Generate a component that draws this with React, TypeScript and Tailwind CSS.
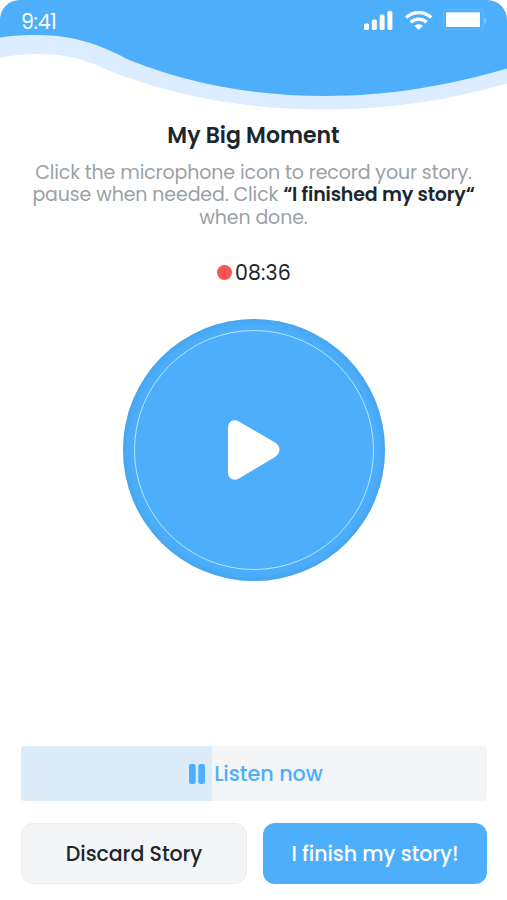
import { useState } from 'react'

const PROGRESS = 41

function StatusIcons() {
  return (
    <svg width="124" height="24" viewBox="363 8 124 24" fill="none">
      <g fill="#fff">
        <rect x="364" y="23.5" width="5" height="6.5" rx="1.6" />
        <rect x="371.8" y="19.5" width="5" height="10.5" rx="1.6" />
        <rect x="379.6" y="14.5" width="5" height="15.5" rx="1.6" />
        <rect x="387.4" y="11" width="5" height="19" rx="1.6" />
      </g>
      <g stroke="#fff" strokeWidth="3.3">
        <path d="M406.2 17.5C413.2 10.9 424.2 10.9 431.2 17.5" />
        <path d="M410.7 22.3C415.2 18.1 422.2 18.1 426.7 22.3" />
      </g>
      <path d="M414.4 25.8C416.9 23.7 420.5 23.7 423 25.8L418.7 30Z" fill="#fff" />
      <rect x="443.5" y="9.5" width="40" height="20" rx="2.5" stroke="#fff" strokeOpacity=".13" />
      <rect x="446" y="12.3" width="34" height="14.7" rx=".8" fill="#fff" />
      <path d="M484.5 17.5C486.8 18.5 486.8 22.5 484.5 23.5Z" fill="#fff" fillOpacity=".4" />
    </svg>
  )
}

function Header() {
  return (
    <header className="relative h-[112px] overflow-hidden rounded-t-[20px]">
      <svg className="absolute inset-0" width="507" height="112" viewBox="0 0 507 112">
        <path d="M0 0H507V83.5C450 100 390 109.5 325 109.5C250 109.5 184 98 117 74C99 67 80 54 39 54C25 54 12 55 0 58Z" fill="#dbedfe" />
        <path d="M0 0H507V68.5C450 85 390 96 325 96C255 96 190 84 133 61.5C112 52 85 35 38 35C25 35 12 35.5 0 37.5Z" fill="#4daefb" />
      </svg>
      <div className="relative flex items-start justify-between pt-2 pr-5 pl-[21px] text-white">
        <span className="mt-[2px] text-[20.5px] leading-[24px] tracking-[-0.3px]">9:41</span>
        <StatusIcons />
      </div>
    </header>
  )
}

export default function App() {
  const [playing, setPlaying] = useState(true)

  return (
    <div className="flex h-[900px] w-[507px] flex-col bg-white font-['Poppins','Inter',sans-serif] text-[#1b262d]">
      <Header />

      <main className="flex flex-1 flex-col items-center">
        <h1 className="mt-[10px] text-[22px] leading-[28px] font-semibold whitespace-nowrap">My Big Moment</h1>
        <div className="mt-[12px] flex flex-col items-center text-[19px] leading-[22.3px] tracking-[-0.13px] whitespace-nowrap text-[#9aa1a6]">
          <span>Click the microphone icon to record your story.</span>
          <span>
            pause when needed. Click{' '}
            <strong className="font-semibold tracking-[-0.15px] text-[#1b262d]">“I finished my story“</strong>
          </span>
          <span>when done.</span>
        </div>

        <div className="mt-[30px] flex items-center gap-[3px] pl-px">
          <span className="size-[15px] rounded-full bg-[#fb5254]" />
          <span className="text-[20.5px] leading-[28px] tracking-[0.1px]">08:36</span>
        </div>

        <button
          onClick={() => setPlaying(!playing)}
          aria-label="Play recording"
          className="mt-[32.5px] flex size-[262px] items-center justify-center rounded-full bg-[#4daefb] shadow-[inset_0_0_8px_#419bdf]"
        >
          <span className="flex size-[240px] items-center justify-center rounded-full border border-[#b4e8ff] bg-[#4daefb]">
            <svg width="52" height="60" viewBox="0 0 52 60" fill="#fff">
              <path d="M0 7.5C0 1.5 5.5 -1.5 11 1.5L47 22.5C53 26 53 33 47 37L11 58.5C5.5 61.5 0 58.5 0 52.5Z" />
            </svg>
          </span>
        </button>
      </main>

      <footer className="flex flex-col gap-[22px] pr-[20px] pb-[16px] pl-[21px]">
        <div className="relative h-[55px] overflow-hidden rounded-[4px] bg-[#f3f5f7]">
          <div className="absolute inset-y-0 left-0 bg-[#dbebf8]" style={{ width: `${PROGRESS}%` }} />
          <button className="relative flex h-full w-full items-center justify-center gap-[9px] pl-[4px] text-[#4daefb]">
            <svg width="16" height="20" viewBox="0 0 16 20" fill="currentColor">
              <rect width="6.7" height="20" rx="2" />
              <rect x="9.3" width="6.7" height="20" rx="2" />
            </svg>
            <span className="text-[20.7px] font-medium">Listen now</span>
          </button>
        </div>

        <div className="flex gap-4">
          <button className="h-[61px] flex-1 rounded-[12px] border border-[#ebeef1] bg-[#f3f5f7] pt-[2px] text-[20.5px] font-medium tracking-[-0.05px] whitespace-nowrap">
            Discard Story
          </button>
          <button className="h-[61px] flex-1 rounded-[12px] bg-[#4daefb] pt-[2px] text-[20.5px] font-medium tracking-[-0.04px] whitespace-nowrap text-white">
            I finish my story!
          </button>
        </div>
      </footer>
    </div>
  )
}
